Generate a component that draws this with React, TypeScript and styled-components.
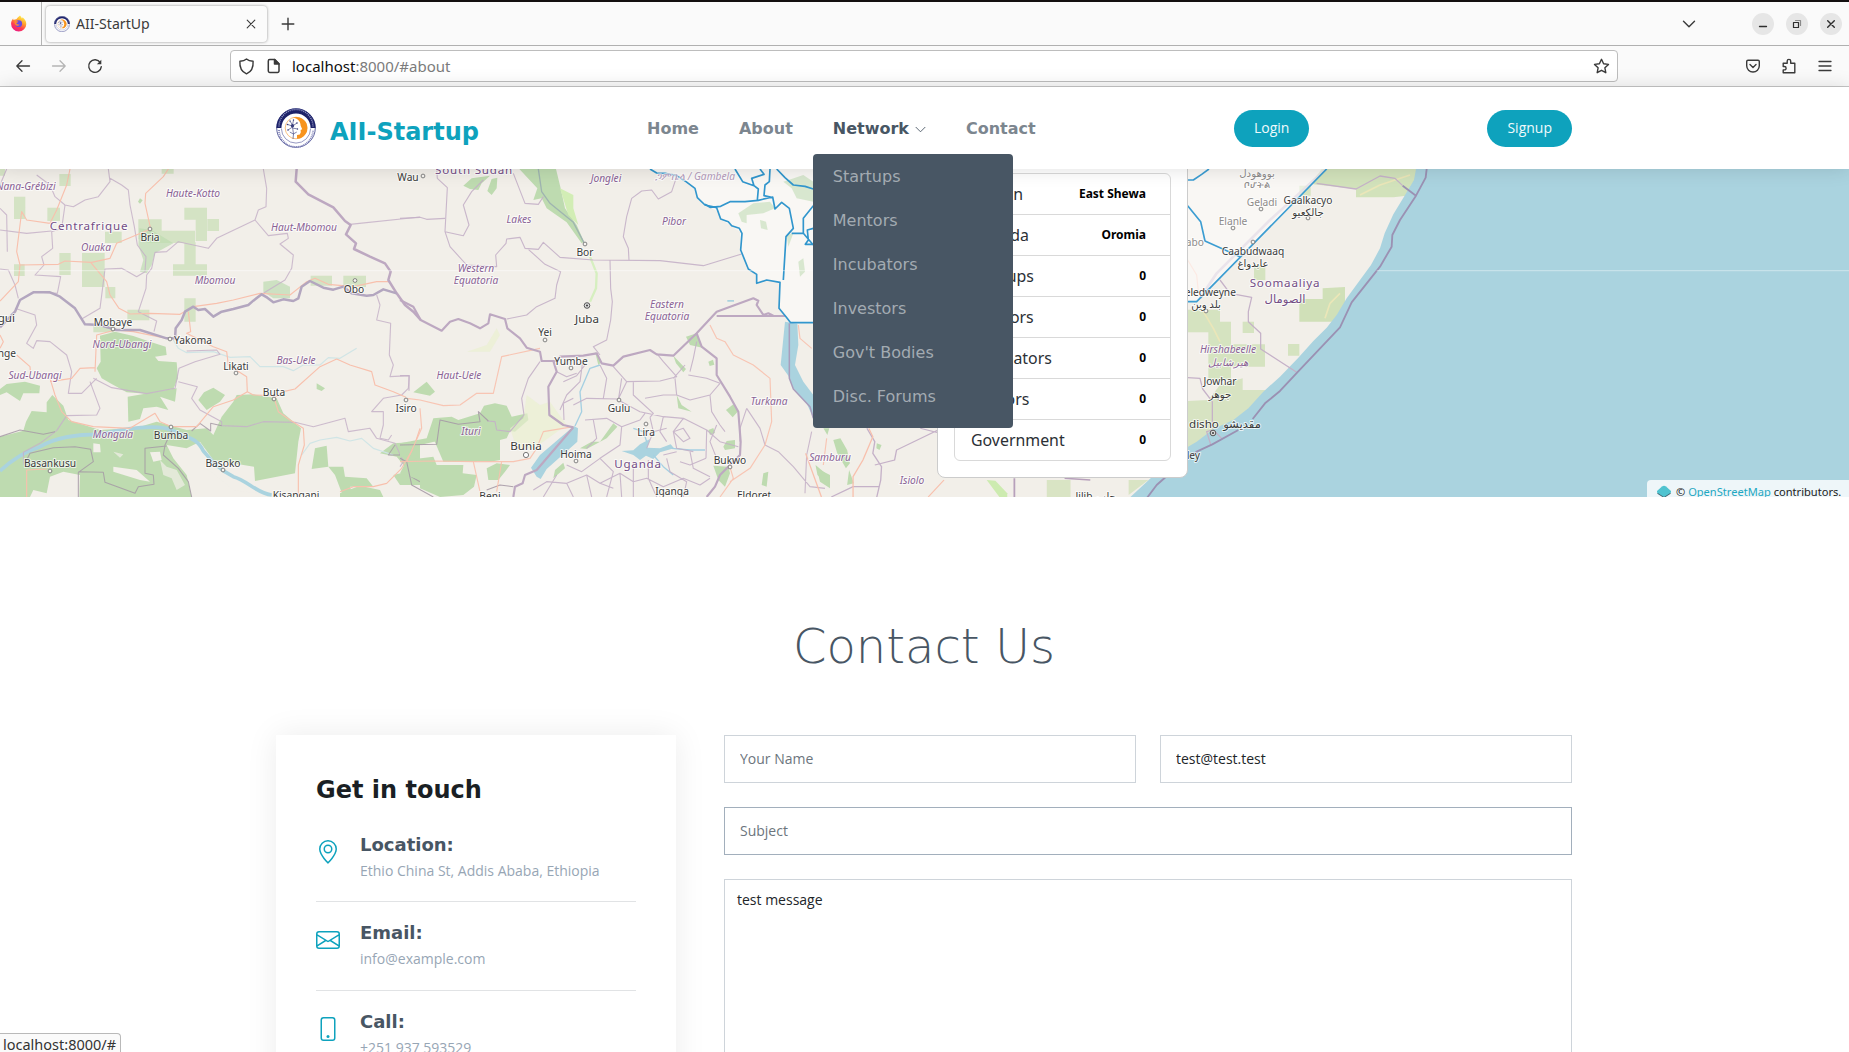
import React from "react";
import styled, { createGlobalStyle } from "styled-components";
import { BsEnvelope, BsGeoAlt, BsPhone } from "react-icons/bs";

const UI = `"Noto Sans", "Open Sans", sans-serif`;
const BODY = `"Open Sans", "Noto Sans", sans-serif`;
const HEAD = `"DejaVu Sans", sans-serif`;
const TEAL = "#0ea2bd";
const SLATE = "#485664";

const Global = createGlobalStyle`
  *, *::before, *::after { box-sizing: border-box; }
  html, body { margin: 0; padding: 0; background: #fff; overflow: hidden; }
  body { font-family: ${BODY}; font-size: 14px; color: #212529; }
`;

const Window = styled.div`
  position: relative;
  display: flex;
  flex-direction: column;
  width: 1849px;
  height: 1052px;
  overflow: hidden;
  background: #fff;
`;

/* ---------- browser chrome ---------- */

const TabStrip = styled.div`
  flex: none;
  display: flex;
  align-items: center;
  height: 46px;
  border-top: 2px solid #130f10;
  border-bottom: 1px solid #b0b0b0;
  background: #fafafa;
`;

const PinnedTab = styled.div`
  display: flex;
  align-items: center;
  width: 42px;
  height: 100%;
  padding-left: 10px;
  border-right: 1px solid #b4b4b4;
`;

const Tab = styled.div`
  display: flex;
  align-items: center;
  width: 221px;
  height: 36px;
  margin-left: 4px;
  padding: 0 11px 0 8px;
  border-radius: 4px;
  background: #fbfbfb;
  box-shadow: 0 0 3px rgba(0, 0, 0, 0.42);
`;

const TabTitle = styled.span`
  flex: 1;
  margin-left: 6px;
  padding-top: 1px;
  font: 14.1px/20px ${UI};
  color: #3a3a3a;
`;

const IconSlot = styled.span<{ $left?: number; $color?: string }>`
  display: inline-flex;
  flex: none;
  margin-left: ${(p) => p.$left ?? 0}px;
  color: ${(p) => p.$color ?? "#3a3a3a"};
  svg { display: block; }
`;

const WindowControls = styled.div`
  display: flex;
  align-items: center;
  gap: 12px;
  margin-left: auto;
  padding-right: 7px;
`;

const RoundButton = styled.span`
  display: grid;
  place-items: center;
  width: 22px;
  height: 22px;
  border-radius: 50%;
  background: #e6e6e6;
  color: #2e2e2e;
  svg { display: block; }
`;

const Toolbar = styled.div`
  flex: none;
  display: flex;
  align-items: center;
  height: 41px;
  padding-left: 15px;
  border-bottom: 1px solid #c6c6c6;
  background: #fafafa;
`;

const UrlField = styled.div`
  display: flex;
  align-items: center;
  width: 1388px;
  height: 32px;
  margin-left: 127px;
  padding: 0 7px 0 7px;
  border: 1px solid #bdbdbd;
  border-radius: 4px;
  background: #fff;
`;

const UrlText = styled.span`
  flex: 1;
  margin-left: 10px;
  font: 15px/20px ${UI};
  color: #7b7b7b;
  b { font-weight: 400; color: #0c0c0d; }
`;

const StatusBubble = styled.div`
  position: absolute;
  left: 0;
  bottom: 0;
  width: 121px;
  height: 19px;
  padding-left: 3px;
  border-top: 1px solid #b9b9b9;
  border-right: 1px solid #b9b9b9;
  border-top-right-radius: 4px;
  background: #fafafa;
  font: 14.5px/21px ${UI};
  color: #333;
  white-space: nowrap;
`;

/* ---------- site header ---------- */

const SiteHeader = styled.header`
  position: relative;
  z-index: 5;
  flex: none;
  height: 82px;
  background: #fff;
  box-shadow: 0 0 18px rgba(0, 0, 0, 0.13);
`;

const HeaderGrid = styled.div`
  display: grid;
  grid-template-columns: 371px 587px 1fr auto;
  align-items: center;
  width: 1296px;
  height: 82px;
  margin: 0 0 0 276px;
`;

const Brand = styled.div`
  display: flex;
  align-items: center;
  height: 41px;
`;

const BrandName = styled.span`
  margin-left: 14px;
  padding-top: 8px;
  font: 700 24px/28px ${HEAD};
  color: ${TEAL};
`;

const Nav = styled.nav`
  display: flex;
  align-items: center;
  gap: 40px;
  padding-top: 2px;
`;

const NavItem = styled.span<{ $active?: boolean }>`
  position: relative;
  display: flex;
  align-items: center;
  gap: 6px;
  font: 700 16px/24px ${HEAD};
  color: ${(p) => (p.$active ? SLATE : "#7c868f")};
  white-space: nowrap;
`;

const Dropdown = styled.div`
  position: absolute;
  top: 37px;
  left: -20px;
  display: flex;
  flex-direction: column;
  width: 200px;
  height: 274px;
  padding-top: 1px;
  border-radius: 4px;
  background: ${SLATE};
`;

const DropdownItem = styled.span`
  padding: 10px 20px;
  font: 400 16px/24px ${HEAD};
  color: #a3abb2;
`;

const Pill = styled.span`
  justify-self: start;
  padding: 7px 20px 9px;
  border-radius: 50px;
  background: ${TEAL};
  font: 14px/21px ${BODY};
  color: #eefafc;
`;

/* ---------- map ---------- */

const MapSection = styled.section`
  position: relative;
  flex: none;
  height: 328px;
  overflow: hidden;
  background: #f2efe9;
`;

const Popup = styled.div`
  position: absolute;
  top: -13px;
  left: 937px;
  width: 251px;
  padding: 16px;
  border: 1px solid #ccc;
  border-radius: 8px;
  background: #fff;
`;

const StatList = styled.div`
  border: 1px solid #d9d9d9;
  border-radius: 6px;
`;

const StatRow = styled.div`
  display: flex;
  align-items: center;
  justify-content: space-between;
  height: 41px;
  padding: 0 24px 0 16px;
  font: 15.9px/24px "Noto Sans", sans-serif;
  color: #2b3035;
  &:first-child { height: 40px; padding-bottom: 1px; }
  & + & { border-top: 1px solid #d9d9d9; }
  b { font: 700 12px/18px "Noto Sans", sans-serif; color: #000; }
`;

const Attribution = styled.div`
  position: absolute;
  right: 0;
  bottom: -6px;
  display: flex;
  align-items: center;
  width: 202px;
  height: 23px;
  padding-left: 10px;
  border-top-left-radius: 4px;
  background: rgba(255, 255, 255, 0.8);
  font: 11.1px/16px "Noto Sans", sans-serif;
  color: #222;
  white-space: nowrap;
  a { color: #1fa8c2; }
  span { margin-left: 5px; }
`;

/* ---------- contact ---------- */

const Contact = styled.section`
  flex: 1;
  display: flex;
  flex-direction: column;
  width: 1296px;
  margin: 0 0 0 276px;
  padding-top: 117px;
`;

const ContactTitle = styled.h2`
  margin: 0;
  height: 121px;
  font: 200 48px/64px ${HEAD};
  text-align: center;
  color: ${SLATE};
`;

const Columns = styled.div`
  display: flex;
  align-items: flex-start;
  gap: 48px;
`;

const InfoCard = styled.div`
  flex: none;
  width: 400px;
  height: 420px;
  padding: 39px 40px;
  background: #fff;
  box-shadow: 0 0 30px rgba(0, 0, 0, 0.08);
`;

const InfoTitle = styled.h3`
  margin: 0 0 19px;
  font: 700 24px/33px ${HEAD};
  color: #1a1f24;
`;

const InfoLabel = styled.h4`
  margin: 6px 0 4px;
  font: 700 18px/22px ${HEAD};
  color: ${SLATE};
`;

const InfoItem = styled.div`
  display: flex;
  height: 89px;
  padding-top: 14px;
  border-bottom: 1px solid #e1e3e5;
  & > svg { flex: none; margin-top: 12px; color: ${TEAL}; }
  &:first-of-type {
    height: 76px;
    padding-top: 1px;
    ${InfoLabel} { margin-top: 7px; }
    & > svg { margin-top: 13px; }
  }
`;

const InfoText = styled.div`
  margin-left: 20px;
`;

const InfoValue = styled.p`
  margin: 0;
  font: 14px/21px ${BODY};
  color: #97a6b5;
`;

const Form = styled.form`
  flex: 1;
  display: grid;
  grid-template-columns: 1fr 1fr;
  gap: 24px;
`;

const Field = styled.input<{ $wide?: boolean; $focus?: boolean }>`
  grid-column: ${(p) => (p.$wide ? "1 / -1" : "auto")};
  width: 100%;
  height: 48px;
  padding: 0 15px 2px;
  border: 1px solid ${(p) => (p.$focus ? "#a2afbc" : "#ced4da")};
  border-radius: 0;
  outline: 0;
  font: 14px/21px ${BODY};
  color: #212529;
  &::placeholder { color: #6c757d; opacity: 1; }
`;

const Message = styled.textarea`
  grid-column: 1 / -1;
  height: 300px;
  padding: 9px 12px;
  border: 1px solid #ced4da;
  outline: 0;
  resize: none;
  font: 14px/21px ${BODY};
  color: #212529;
`;

/* ---------- icons ---------- */

const Stroke = ({ size = 16, box = 16, w = 1.3, children }: any) => (
  <svg width={size} height={size} viewBox={`0 0 ${box} ${box}`} fill="none" stroke="currentColor"
    strokeWidth={w} strokeLinecap="round" strokeLinejoin="round">{children}</svg>
);

const FirefoxLogo = () => (
  <svg width="17" height="17" viewBox="0 0 17 17">
    <defs>
      <linearGradient id="fx" x1="0.75" y1="0.05" x2="0.25" y2="1">
        <stop offset="0" stopColor="#fff04a" /><stop offset="0.35" stopColor="#ffa02c" />
        <stop offset="0.65" stopColor="#ff3d51" /><stop offset="1" stopColor="#e8178a" />
      </linearGradient>
    </defs>
    <path d="M10 0.6c1 1 1.6 1.9 1.9 2.9 .5-.4.7-.8.7-1.2 2.200 1.700 3.700 4 3.700 6.700a7.600 7.600 0 0 1-15.200 0c0-2.200.7-4 2-5.400l.4 1.500c.8-.6 1.700-.9 2.800-.9C7.300 2.900 8.600 1.800 10 .6z" fill="url(#fx)" />
    <circle cx="8.700" cy="8.700" r="3.400" fill="#6b4be0" />
    <path d="M4.500 6.300c1.500-.7 2.600.1 3.800.3-.2 1.100-1.200 1.300-2 1.500.3 1.400 2 1.700 3.200 1.100-1 2.600-5.300 2.200-5-2.900z" fill="#ff8a2e" />
  </svg>
);

/* Round seal: navy upper band, outlined lower band, orange profile and neural branches */
const Seal = ({ size }: { size: number }) => (
  <svg width={size} height={size} viewBox="0 0 40 40">
    <circle cx="20" cy="20" r="19.3" fill="#fff" stroke="#4a4f92" strokeWidth="0.900" />
    <path d="M0.400 20a19.600 19.600 0 0 1 39.200 0h-5a14.600 14.600 0 0 0-29.200 0z" fill="#1c2168" />
    <path d="M3 18.500a17 17 0 0 1 34 0" fill="none" stroke="#a9acd6" strokeWidth="1.500" strokeDasharray="1.100 0.900" opacity="0.800" />
    <path d="M3 22a17 17 0 0 0 34 0" fill="none" stroke="#8587bb" strokeWidth="1.900" strokeDasharray="1 0.900" />
    <path d="M5.400 20.500a14.600 14.600 0 0 0 29.200 0" fill="none" stroke="#6a6da8" strokeWidth="0.700" />
    <circle cx="20" cy="20" r="10.800" fill="#fff" stroke="#f5a54a" strokeWidth="0.700" />
    <path d="M17 9.600a10.900 10.900 0 1 1 4 21.200v-3.800l2.800-.4 1-2.400-.2-2.200 1.600-.8-1.600-3.600c0-4.300-3.200-7-7.600-8z" fill="#f7931e" />
    <path d="M17 31l.5-5-1-7M16.500 18l-5-1.500M16.500 18l4.500-3M16.500 17l-2.500-4M16.500 17l1-5M16.500 19l-4.500 3M16.500 20l5 1M17.300 26l-3.500-2M17.300 26l3.500-2" fill="none" stroke="#3a3f7d" strokeWidth="0.650" />
    <circle cx="16.500" cy="17.700" r="1.700" fill="#3a3f7d" />
    <g fill="#3a3f7d"><circle cx="11.500" cy="16.500" r=".8" /><circle cx="21" cy="15" r=".8" /><circle cx="14" cy="13" r=".7" /><circle cx="17.500" cy="12" r=".7" /><circle cx="12" cy="22" r=".8" /><circle cx="21.500" cy="21" r=".7" /></g>
  </svg>
);

/* ---------- map drawing ---------- */

type Kind = "city" | "big" | "region" | "country" | "faded" | "fadedRegion";
const KIND: Record<Kind, any> = {
  city: { fontSize: 10.2, fill: "#3a3a3a" },
  big: { fontSize: 11.6, fill: "#3a3a3a" },
  region: { fontSize: 10.2, fontStyle: "italic", fill: "#8a6295" },
  country: { fontSize: 11.6, fill: "#734c85", letterSpacing: 0.8 },
  faded: { fontSize: 10.2, fill: "#8d8b8a" },
  fadedRegion: { fontSize: 10.2, fontStyle: "italic", fill: "#b59cbc" },
};

type Label = [string, number, number, Kind, ("start" | "end")?];

const LABELS: Label[] = [
  ["Nana-Grébizi", 26, 17, "region"], ["Haute-Kotto", 193, 24, "region"], ["Haut-Mbomou", 304, 58, "region"],
  ["Centrafrique", 89, 57, "country"], ["Ouaka", 96, 78, "region"], ["Bria", 150, 68, "city"],
  ["Mbomou", 215, 111, "region"], ["Obo", 354, 120, "city"], ["Bangui", 15, 149, "big", "end"],
  ["Mobaye", 113, 153, "city"], ["Yakoma", 193, 171, "city"], ["Nord-Ubangi", 122, 175, "region"],
  ["Businge", 16, 184, "city", "end"], ["Sud-Ubangi", 35, 206, "region"], ["Likati", 236, 197, "city"],
  ["Bas-Uele", 296, 191, "region"], ["Buta", 274, 223, "city"], ["Isiro", 406, 239, "city"],
  ["Mongala", 113, 265, "region"], ["Bumba", 171, 266, "city"], ["Basankusu", 50, 294, "city"],
  ["Basoko", 223, 294, "city"], ["Kisangani", 296, 326, "city"], ["Wau", 408, 8, "city"],
  ["South Sudan", 474, 1, "country"], ["Jonglei", 606, 9, "region"], ["ጋምቤላ / Gambela", 695, 7, "fadedRegion"],
  ["Lakes", 519, 50, "region"], ["Pibor", 674, 52, "region"], ["Bor", 585, 83, "city"],
  ["Western", 476, 99, "region"], ["Equatoria", 476, 111, "region"], ["Juba", 587, 150, "big"],
  ["Yei", 545, 163, "city"], ["Eastern", 667, 135, "region"], ["Equatoria", 667, 147, "region"],
  ["Yumbe", 571, 192, "city"], ["Haut-Uele", 459, 206, "region"], ["Gulu", 619, 239, "city"],
  ["Turkana", 769, 232, "region"], ["Lira", 646, 263, "city"], ["Ituri", 471, 262, "region"],
  ["Bunia", 526, 277, "big"], ["Hoima", 576, 285, "city"], ["Uganda", 638, 295, "country"],
  ["Bukwo", 730, 291, "city"], ["Iganga", 672, 322, "city"], ["Eldoret", 754, 326, "city"],
  ["Beni", 490, 327, "city"], ["Samburu", 830, 288, "region"], ["Isiolo", 912, 311, "region"],
  ["بووهودل", 1257, 4, "faded"], ["ቦሆትል", 1257, 15, "faded"], ["Geladi", 1262, 33, "faded"], ["Gaalkacyo", 1308, 31, "city"],
  ["جالكعيو", 1308, 43, "city"], ["Elanle", 1233, 52, "faded"], ["Qabribayabo", 1204, 73, "faded", "end"],
  ["Caabudwaaq", 1253, 82, "city"], ["عابدواغ", 1253, 94, "city"], ["Beledweyne", 1207, 123, "city"],
  ["بلد وين", 1206, 135, "city"], ["Soomaaliya", 1285, 114, "country"], ["الصومال", 1285, 130, "country"],
  ["Hirshabeelle", 1228, 180, "region"], ["هيرشابيل", 1228, 193, "region"], ["Jowhar", 1220, 212, "city"],
  ["جوهر", 1220, 225, "city"], ["disho", 1189, 255, "big", "start"], ["مقديشو", 1242, 255, "big"],
  ["Barawa ley", 1200, 286, "city", "end"], ["Jilib", 1084, 327, "city"], ["جلب", 1106, 327, "city"],
];

const TOWNS = [
  [150, 60], [355, 111.500], [113, 160], [170, 170], [236, 204], [274, 230], [406, 231], [171, 258], [50, 302],
  [223, 301], [423, 7], [585, 75], [545, 171], [571, 199], [619, 231], [646, 255], [576, 292], [730, 298],
  [1261, 40], [1308, 49], [1233, 59], [1253, 73], [1206, 142], [1220, 230],
];

const box = (list: number[][]) => list.map(([x, y, w, h]) => `M${x},${y}h${w}v${h}h${-w}z`).join("");

const West = () => (
  <g transform="translate(0,-4) scale(0.33333)" fill="none" strokeLinejoin="round">
    <path fill="#cfe0bd" opacity="0.850" d={box([[178, 27, 34, 36], [42, 95, 34, 67], [142, 128, 38, 40], [415, 163, 70, 60], [440, 197, 145, 37], [553, 128, 68, 36],
      [587, 162, 34, 66], [622, 162, 35, 36], [553, 232, 34, 66], [519, 298, 102, 34], [178, 264, 34, 66], [246, 264, 68, 102], [316, 366, 30, 34],
      [42, 298, 32, 35], [382, 434, 66, 32], [553, 400, 34, 70], [315, 200, 50, 34], [932, 332, 64, 30], [1030, 332, 68, 34], [0, 12, 15, 20], [485, 12, 36, 14], [280, 480, 60, 22]])} />
    <path fill="#bedbb0" d="M418,190 455,195 520,235 465,265 455,300 440,325 420,320 430,285 415,240zM790,350 830,345 870,365 870,400 820,400 790,380z" opacity="0.700" />
    <g fill="#bedbb0">
      <path d="M300,512 345,500 400,513 450,530 497,545 500,570 465,575 475,588 530,592 534,640 520,672 440,686 380,682 335,657 305,640 290,610 302,590z" />
      <path d="M20,657 75,650 120,662 118,685 70,685 60,708 20,682 0,690 0,672z" />
      <path d="M0,815 70,797 78,770 95,738 140,742 140,712 157,690 190,722 205,765 300,795 410,788 470,770 560,795 620,790 640,810 665,755 700,710 710,690 760,688 830,700 850,745 903,790 895,830 885,925 765,948 762,905 640,885 600,830 560,850 500,840 520,880 560,930 575,996 0,996z" />
      <path d="M595,705 612,682 640,668 675,690 660,710 620,735zM383,695 530,670 525,710 480,695 505,735 470,725 430,730 420,762 385,770z" />
      <path d="M945,850 980,842 985,905 935,912zM1140,865 1180,835 1260,830 1260,900 1215,905 1190,875zM985,905 1030,905 1035,935 1100,940 1120,965 1050,965 1060,996 1030,996 1005,930zM1020,985 1080,962 1140,975 1150,996 1020,996zM950,655 975,670 965,678 950,672zM420,100l8,6-8,10-6-6zM1180,930l40,-10 40,10v30h-60z" />
    </g>
    <g fill="#f2efe9">
      <path d="M150,935 190,920 240,930 238,996 90,996 100,975 140,985zM280,835 300,838 302,862 280,862zM450,862 480,860 485,885 460,890zM340,905l70,10 40,35-30,-5-80,-25z" />
      <path d="M480,885 500,905 530,915 555,960 530,975 515,940 490,930zM340,860l30,8-10,10z" opacity="0.700" />
      <path d="M610,868 640,885 700,940 740,948 770,985 700,975 640,925 600,900z" opacity="0.500" />
    </g>
    <path stroke="#aad3df" strokeWidth="11" d="M0,918C40,880 80,858 120,845C170,815 230,808 300,808C380,790 470,775 520,797C560,820 590,815 610,858C630,880 650,910 700,935C740,945 770,985 815,990" />
    <path stroke="#d0e5e6" strokeWidth="3.600" d="M520,525 535,550 560,563 640,560 690,577 750,575 780,605 850,605 880,617 910,600 960,600 985,578 1020,580 1070,550M905,870 930,835 960,825 1010,817 1050,828 1085,820 1120,850 1180,870" />
    <g stroke="#c5b1c8" strokeWidth="3.300" strokeOpacity="0.850">
      <path d="M325,12 330,50 295,95 255,105 220,125 195,120 165,95 150,60 110,30M330,40 365,60 385,75 390,120 403,185 412,240 438,275 435,320 410,335 380,318 365,310 315,312 300,430 245,462M790,12 800,70 798,125 775,135 765,165 650,220 625,250 535,230 500,260 465,262 455,310 440,330 438,370 415,440 470,468 462,500M765,165 805,212 862,205 865,220 840,237 880,270 875,310 855,345 790,385" />
      <path d="M1050,178 1260,156M1130,390 1140,420 1130,465 1172,475 1168,570 1180,600 1170,635 1228,632 1225,670 1205,690 1150,700 1115,740 1150,740 1150,780 1140,820 1165,825 1175,810M195,120 185,190 155,200 158,250 125,275 132,300 105,330 182,335 172,385 130,382M45,430 105,450 110,480 80,535 100,550 110,527 150,530 200,570 215,620 205,685 245,685 290,640" />
      <path d="M0,195 80,205 155,198M0,312 25,315 45,360 55,400M20,12 0,60M0,130 20,150 22,260M270,650 300,730 290,750 200,752 170,797 120,835 70,862 72,900M280,640 335,668 440,686 525,670 537,610 585,590 660,568 650,555 560,558M535,650 592,665 575,700 600,735 665,770 665,782 740,785 790,770 885,772 940,785 1035,760 1045,800 1110,790 1130,820 1185,835 1210,890 1200,905" />
    </g>
    <g stroke="#a69aa6" strokeWidth="3.200" opacity="0.850">
      <path d="M0,815 60,795 130,808 165,800M75,895 90,865 160,848 225,845 272,853 280,890 235,922 235,996M235,920 310,922 315,952 405,985 415,965 462,958 460,930 435,925 435,850 500,843" />
      <path d="M515,797 495,840 490,870 535,910 565,950 575,996M575,798 600,775 632,798 632,775 665,782M1185,840 1165,870 1200,870 1222,850M1215,900 1225,930 1260,950" />
    </g>
    <g stroke="#f8c0ad" strokeWidth="3.400">
      <path d="M505,12 490,35 437,85 435,115 452,192 350,235 330,280 275,292 195,288 175,298 60,300 55,350 0,408M60,300 50,260 60,180 65,140 80,165 150,175 170,135 200,60 210,12M272,292 320,350 330,390 357,430 390,447 450,445 540,448 580,425 650,415 700,405 780,385 870,390 920,350 945,340 985,358 1060,365 1130,350 1170,350" />
      <path d="M565,440 572,500 560,505 640,545 680,560 685,600 740,635 742,680 760,690 820,692 835,740 870,765 910,790 913,840 895,900 895,996M520,785 590,785 640,725 700,705 742,680M150,640 165,690 185,740 215,770 280,785 390,790 465,745 480,770 515,785M285,620 290,510 345,495 400,500 500,520M285,608 240,610 215,640 150,650M0,510 10,530 0,550M50,570 90,605 92,630" />
      <path d="M820,700 850,680 885,672 960,605 1010,582 1050,600 1115,620 1125,660 1180,680 1218,697M1260,790 1240,850 1205,910 1160,955 1120,965 1060,965 1020,980M80,996 80,915 140,912" />
    </g>
    <path stroke="#bda8c1" strokeWidth="7.500" d="M890,12 887,50 925,88 1000,127 1035,168 1052,180 1038,208 1068,235 1062,252 1110,275 1155,295 1172,320 1165,345 1190,385 1215,420 1240,440 1262,465" />
    <path stroke="#b3a6bf" strokeWidth="7.500" d="M0,487 45,440 60,405 100,382 150,382 180,395 225,430 255,478 300,480 350,495 420,495 500,520 525,520 527,490 545,465 555,440 580,425 595,435 615,432 640,455 665,440 700,432 745,420 760,407 785,388 802,398 820,412 850,403 880,408 895,400 905,365 930,348 970,368 1000,374 1030,365 1055,385 1100,392 1120,390 1150,373 1190,385" />
  </g>
);

const Middle = () => (
  <g transform="translate(400,-4) scale(0.33333)" fill="none" strokeLinejoin="round">
    <g fill="#bedbb0">
      <path d="M358,12H468L482,70 495,130 530,180 552,230 545,235 500,172 440,130 425,100 400,105 412,70z" />
      <path d="M190,62 215,40 270,32 245,55 235,75 210,72zM262,78 275,42 292,38 290,70 275,90z" />
      <path d="M0,835 80,820 100,760 155,755 175,765 240,745 252,722 285,715 320,722 335,755 382,745 385,765 345,800 330,798 320,820 300,825 300,885 270,890 225,888 220,830 125,825 60,840 0,880z" />
      <path d="M100,820h130v70l-100,0z" />
      <path d="M20,885 100,875 110,900 190,900 188,925 230,930 222,965 190,990 120,996 60,970 60,945 0,925zM40,682 80,650 105,680 90,692zM260,910l30,-15 40,5-15,20 -20,25h-30z" />
      <path d="M858,515 890,505 907,548 870,540zM820,572 858,612 850,622 828,595zM540,850 575,830 600,830 640,775 652,785 620,820 560,852zM978,735 1000,718 1015,738 998,757zM970,845 980,828 1005,825 1005,850 975,855zM940,902 985,905 990,925 975,965 955,945zM925,795l15,-6 5,15-15,6zM925,590l14,-6 4,15-14,4zM465,915 490,893 495,910 460,940zM830,690l15,30 30,20-40,-10zM585,560l20,30-10,10zM1250,910l40,20v40l-30,-20zM1090,925l15,-5 -5,45-15,-5z" />
    </g>
    <path fill="#d2edb5" d="M480,70 520,90 520,130 535,180 505,150z" />
    <path fill="#e9f0cf" d="M380,690 420,720 450,710 500,780 430,830 400,850 350,850 330,790 370,760zM200,560l60,-20 30,-50 10,20-30,50z" opacity="0.650" />
    <path stroke="#d6efc0" strokeWidth="7" d="M570,275 590,325 588,370 570,410" />
    <path stroke="#9fb4b0" strokeWidth="4" d="M415,12 425,80 450,115 520,172 553,235" />
    <g fill="#aad3df">
      <path d="M522,783 534,790 532,830 440,912 422,942 410,935 393,908 420,870z" />
      <path d="M1155,470 1192,476 1195,540 1185,600 1210,650 1240,690 1240,760 1220,715 1180,670 1165,632 1142,600 1150,520z" />
      <path d="M665,858 700,856 720,838 750,822 742,848 780,850 812,838 822,850 780,862 760,882 738,872 720,885 700,870zM982,405h20v5h-20z" />
    </g>
    <path stroke="#a5d0e2" strokeWidth="4" d="M760,870 790,905 820,930M740,830 730,800 700,790M815,850 870,855 915,855M600,600 570,610 540,680 545,740 525,783" />
    <g stroke="#c5b1c8" strokeWidth="3.300" opacity="0.900">
      <path d="M110,12 112,40 142,68 135,200 190,212 207,180 190,120 215,80 250,45M340,25 375,115 415,118 430,95M0,160 60,157 80,163 135,160M135,200 150,245 200,300 290,305 287,270 318,235 320,222 360,217 375,250 415,253 430,232 480,277 580,285 780,287 910,302 1025,267M385,253 435,298 482,320 470,360 465,400 410,425 380,450 320,462" />
      <path d="M630,285 632,370 637,410 632,465 620,525 580,545 600,570M830,35 815,80 775,102 755,75 725,78 695,100 680,155 670,215 685,250 687,285M420,590 385,640 365,700 372,750 330,800 290,795 285,770 262,768M0,632h27v45" />
      <path d="M470,620 500,635 530,625M490,650 530,632 555,600M548,590 540,650 500,690 480,735M520,700 490,715 492,765M520,720 560,700 655,702 680,650 640,605M600,600 620,640 610,700M680,650 780,648 830,635 790,590 770,565M700,650 700,690 760,745 750,757M735,700 790,690 830,690 825,640M665,640 655,705 720,740 790,755 850,760 920,795 918,880M830,690 870,705 930,690 935,740 960,780 975,800M870,620 880,580 890,530M865,630 920,640 960,655 930,690M855,600 820,640M555,765 620,760 665,785 660,840 600,880 545,920 500,900M580,765 590,820 560,850M665,785 720,765 735,745M750,757 760,800 740,850M850,760 820,800 830,850 880,860M790,755 780,800 800,830M1040,730 1080,790 1095,840 1135,860 1180,905 1230,965 1275,970M1040,730 1020,790 1020,830M1235,800 1220,870 1215,985" />
      <path d="M400,975 440,950 500,955 560,930 600,955 660,925 700,950 740,940 790,965 850,940 900,960 930,940M430,996 470,930M500,955 520,996M560,930 575,996M600,880 640,920 620,996M660,925 665,996M700,890 700,996M745,885 745,940 770,996M800,880 810,920 860,950 850,996M870,860 880,910 930,935M820,800 850,830 870,820 850,790zM760,800 800,790M790,870 830,860M600,955 640,970M918,880 870,900 840,890" />
      <path d="M920,795 960,830 1015,845M950,780 930,830 950,880" />
    </g>
    <path stroke="#a69aa6" strokeWidth="3.200" opacity="0.900" d="M265,768 235,740 240,770 175,778 120,765 110,838 0,840M0,880 20,890 35,960 100,996M260,975 300,960 340,965" />
    <g stroke="#f8c0ad" strokeWidth="3.400" opacity="0.900">
      <path d="M930,480 950,520 975,530 1000,570 1060,600 1110,640 1115,770 1095,840 1050,910 990,950M20,700 60,705 130,722 180,720 230,685 280,685 305,575 420,550M0,890 100,888 220,890 340,890 390,880 410,850 430,800 520,785M60,730 65,790 20,890M220,890 240,980M305,890 290,980M1195,480 1200,520 1235,550M990,906 1000,940 960,996M1280,820 1270,900" />
    </g>
    <g stroke="#bda8c1" strokeWidth="6.500">
      <path d="M0,405 40,425 62,465 125,497 150,470 175,462 210,475 240,490 265,475 270,448 315,462 322,490 360,520 380,548 420,560 425,588 470,588 480,575 550,572 590,565 605,595 640,602 670,575 750,555 770,568 820,572 890,505 950,440 1060,400 1075,407 1070,420 1090,450 1105,445 1120,452M950,453H1155" />
      <path d="M460,588 470,620 445,665 448,750 490,780 520,787M520,787 410,915 375,930 368,955 345,965 340,996M890,505 905,545 950,580 950,630 990,695 1015,740 1022,830 1020,870 960,930 945,965 920,996" />
      <path d="M1168,475V640L1180,672 1230,725 1240,760" stroke="#a99dbc" strokeWidth="4.500" />
    </g>
  </g>
);

const South = () => (
  <g transform="translate(600,-69) scale(0.3954,0.33333)" fill="none">
    <path fill="#bedbb0" d="M565,985 580,985 575,1005zM590,1020 608,1015 625,1050 632,1090 622,1105 600,1060zM545,1095 570,1120 580,1155 550,1125zM630,1110 642,1150 625,1155zM700,1030l12,5-5,15-8,-5z" />
    <path fill="#cdebb0" d="M978,1140 1000,1142 1030,1180 1030,1191 1010,1191z" />
    <path stroke="#c5b1c8" strokeWidth="3.400" d="M675,985 695,1025 690,1060 712,1100 710,1140 700,1191M860,1000 810,985M855,990 750,1050 745,1080 695,1095M585,1191 640,1160 705,1160" />
    <path stroke="#b7a0bb" strokeWidth="4.500" d="M1048,1135V1191M1175,1135 1240,1140" />
    <path stroke="#f8c0ad" strokeWidth="3.300" d="M680,985 690,1010 665,1080 640,1130 640,1191M520,1060 560,1191M870,1140 830,1191" />
    <path fill="#cfe0b4" opacity="0.700" d="M1130,1140h60v51h-60zM1337,1140h50l-50,45z" />
  </g>
);

const East = () => (
  <g transform="translate(1180,-4) scale(0.33333)" fill="none" strokeLinejoin="round">
    <g fill="#d0e0b8">
      <path d="M400,45 425,12H720L700,60 680,92 640,97H528V72L400,58z" opacity="0.950" />
      <path opacity="0.850" d={box([[222, 300, 34, 45], [23, 434, 97, 68], [120, 470, 33, 34], [188, 470, 34, 34], [85, 502, 68, 103], [153, 538, 102, 67], [324, 537, 34, 35], [85, 605, 68, 40], [358, 62, 34, 30]])} />
      <path d="M428,370 495,366V420L470,470H358V402H428z" />
      <path d="M23,708 85,705 120,660 188,640V675H258L160,780 23,860z" opacity="0.800" />
    </g>
    <path stroke="#ebe6b8" strokeWidth="5" d="M70,440 100,490 120,530M435,460 450,415 480,385M540,90 600,60 690,30" />
    <path fill="#aad3df" d="M708,12 702,45 672,95 640,148 614,205 600,250 573,300 540,345 500,400 470,450 440,488 400,528 355,578 300,635 250,680 205,730 160,765 100,792 50,830 23,846 -84,936 -153,1000H2010V12z" />
    <path stroke="#c5b1c8" strokeWidth="3.800" d="M410,55 528,72 600,33 645,40 668,62M120,345 150,385 215,397 205,440 205,470 242,505 242,552 350,622M23,638 60,640 68,672 97,710V790M97,795 80,800 92,838M100,795 125,820" />
    <path stroke="#c9b8ce" strokeWidth="8" opacity="0.700" d="M440,10 270,165 110,325 60,400" />
    <path stroke="#f9d3c6" strokeWidth="3.500" d="M23,285 50,330 55,380" />
    <path stroke="#9b91b3" strokeWidth="5.500" d="M740,12 737,38 708,92 660,165 637,210 635,245 600,305 515,412 480,487 352,622 300,678 255,715 218,762M175,795 97,838 50,860 15,885 -70,960 -100,1000M668,62 708,92" />
    <path stroke="#fff" strokeOpacity="0.350" strokeWidth="4" d="M590,317H2010" />
  </g>
);

const Ethiopia = () => (
  <g transform="translate(400,-4) scale(0.33333)" strokeLinejoin="round">
    <path fill="#fff" fillOpacity="0.500" d="M750,12 790,28 830,30 885,70 890,100 915,120 955,140 965,165 1020,200 1020,260 1045,310 1070,330 1070,355 1100,345 1140,352V430L1170,475H1240L2390,410 2520,275 2780,12z" />
    <path fill="#bedbb0" opacity="0.550" d="M1015,145 1060,115 1110,110 1125,130 1090,145 1040,150 1040,175 1025,170zM1080,165l18,5 5,25-20,-5zM1160,210l20,-5-15,40zM1195,290l15,-10 5,40-15,15zM1150,50l60,-20 30,20v60l-50,-10-15,-30z" />
    <g fill="none" stroke="#3196cd" strokeWidth="5">
      <path d="M750,12 770,24 795,25 830,32 858,50 885,70 892,98 915,120 950,128 962,162 985,170 995,182 1018,190 1026,205 1022,255 1045,312 1070,328 1070,355 1100,345 1140,352 1137,430 1158,455 1172,473H1240" />
      <path d="M915,118 930,127 962,124 990,110 1035,110 1075,106 1118,96 1125,132 1145,112 1168,130 1180,190 1158,215 1150,345M1005,12 1028,50 1062,62 1055,40 1092,28 1080,12M1062,62 1075,72 1072,105M1110,12 1108,50 1095,60 1092,92 1118,98M1130,12 1155,38 1180,60 1215,64 1240,72M1175,205 1210,205 1210,160 1240,122M1210,205 1240,240M1240,190 1222,195 1225,225 1216,238H1240" />
    </g>
    <path fill="none" stroke="#3b9dd2" strokeWidth="5" d="M2363,45H2380L2405,28 2427,12M2363,122 2402,170 2415,228 2520,275M2780,12 2390,410H2363" />
  </g>
);

const MapSvg = styled.svg`
  display: block;
`;

const MapDrawing = () => (
  <MapSvg width="1849" height="328" viewBox="0 0 1849 328">
    <West />
    <Middle />
    <South />
    <East />
    <Ethiopia />
    <path d="M0,101.700H813" stroke="#fff" strokeOpacity="0.500" />
    {TOWNS.map(([x, y]) => (
      <circle key={`${x}-${y}`} cx={x} cy={y} r="1.900" fill="#f7f5f1" stroke="#777" strokeWidth="0.900" />
    ))}
    <circle cx="526" cy="286" r="2.600" fill="#fff" stroke="#777" />
    {[[587, 136.500], [1213, 264]].map(([x, y]) => (
      <g key={x}><circle cx={x} cy={y} r="2.800" fill="#ddd" stroke="#555" /><circle cx={x} cy={y} r="1.100" fill="#444" /></g>
    ))}
    <g fontFamily='"Noto Sans", "DejaVu Sans", sans-serif' stroke="#fff" strokeOpacity="0.700" strokeWidth="2" paintOrder="stroke" strokeLinejoin="round">
      {LABELS.map(([text, x, y, kind, anchor], i) => (
        <text key={i} x={x} y={y + 3.700} textAnchor={anchor ?? "middle"} {...KIND[kind]}>{text}</text>
      ))}
    </g>
  </MapSvg>
);

const STATS = [
  ["Region", "East Shewa"], ["Woreda", "Oromia"], ["Startups", "0"], ["Mentors", "0"],
  ["Incubators", "0"], ["Doctors", "0"], ["Government", "0"],
];

const MENU = ["Startups", "Mentors", "Incubators", "Investors", "Gov't Bodies", "Disc. Forums"];

const INFO = [
  { icon: BsGeoAlt, label: "Location:", value: "Ethio China St, Addis Ababa, Ethiopia" },
  { icon: BsEnvelope, label: "Email:", value: "info@example.com" },
  { icon: BsPhone, label: "Call:", value: "+251 937 593529" },
];

export default function App() {
  return (
    <Window>
      <Global />
      <TabStrip>
        <PinnedTab><FirefoxLogo /></PinnedTab>
        <Tab>
          <Seal size={16} />
          <TabTitle>AII-StartUp</TabTitle>
          <IconSlot><Stroke size={10} box={10} w={1.100}><path d="M1.200 1.200l7.600 7.600M8.800 1.200L1.200 8.800" /></Stroke></IconSlot>
        </Tab>
        <IconSlot $left={14}><Stroke size={14} box={14} w={1.400}><path d="M7 1.200v11.600M1.200 7h11.600" /></Stroke></IconSlot>
        <WindowControls>
          <IconSlot><Stroke size={14} box={14} w={1.400}><path d="M1.500 4.200L7 9.800l5.500-5.600" /></Stroke></IconSlot>
          <IconSlot $left={44}><RoundButton><Stroke size={10} box={10} w={1.300}><path d="M1.500 7.500h7" /></Stroke></RoundButton></IconSlot>
          <RoundButton><Stroke size={10} box={10} w={1.200}><path d="M1.500 3.500h5v5h-5z" /><path d="M3.500 1.500h5v5" opacity="0.500" /></Stroke></RoundButton>
          <RoundButton><Stroke size={10} box={10} w={1.400}><path d="M1.700 1.700l6.600 6.600M8.300 1.700L1.700 8.300" /></Stroke></RoundButton>
        </WindowControls>
      </TabStrip>

      <Toolbar>
        <IconSlot><Stroke><path d="M14.500 8H1.800M7 2.800L1.800 8 7 13.200" /></Stroke></IconSlot>
        <IconSlot $left={20} $color="#b5b5b5"><Stroke><path d="M1.500 8h12.700M9 2.800L14.200 8 9 13.200" /></Stroke></IconSlot>
        <IconSlot $left={20}>
          <Stroke w={1.400}><path d="M13.300 4.600A6.300 6.300 0 1 0 14.300 8.600" /><path d="M14.300 1.800v4.400H9.900z" fill="currentColor" stroke="none" /></Stroke>
        </IconSlot>
        <UrlField>
          <IconSlot><Stroke size={17} box={17} w={1.400}><path d="M8.500 1C6.800 2.500 4.500 3.100 1.900 3.200c-.4 5.600 1.500 10.400 6.600 12.700 5.100-2.300 7-7.100 6.600-12.700C12.500 3.100 10.200 2.500 8.500 1z" /></Stroke></IconSlot>
          <IconSlot $left={11}>
            <Stroke w={1.500}><path d="M3.700 1.500h5.100l4.200 4.200v7.300a1.400 1.400 0 0 1-1.400 1.400H3.700A1.400 1.400 0 0 1 2.300 13V2.900a1.400 1.400 0 0 1 1.400-1.400z" /><path d="M8.500 1.500V6h4.500z" fill="currentColor" /></Stroke>
          </IconSlot>
          <UrlText><b>localhost</b>:8000/#about</UrlText>
          <IconSlot><Stroke size={17} box={17} w={1.400}><path d="M8.500 1.300l2.100 4.500 4.900.6-3.600 3.400.9 4.900-4.300-2.400-4.300 2.400.9-4.900L1.500 6.400l4.900-.6z" /></Stroke></IconSlot>
        </UrlField>
        <IconSlot $left={127}><Stroke w={1.400}><path d="M3 2.200h10a1.300 1.300 0 0 1 1.300 1.300v4.200a6.300 6.300 0 0 1-12.600 0V3.500A1.300 1.300 0 0 1 3 2.200z" /><path d="M5 6.500l3 2.900 3-2.900" /></Stroke></IconSlot>
        <IconSlot $left={20}><Stroke w={1.400}><path d="M2.200 14.700V11.900h1.200a1.500 1.500 0 1 0 0-3.400H2.200V5.300h4V3.100a1.700 1.700 0 0 1 3.500 0v2.200h4.100v9.400z" /></Stroke></IconSlot>
        <IconSlot $left={20}><Stroke w={1.300}><path d="M2 3.500h12M2 8h12M2 12.500h12" /></Stroke></IconSlot>
      </Toolbar>

      <SiteHeader>
        <HeaderGrid>
          <Brand><Seal size={40} /><BrandName>AII-Startup</BrandName></Brand>
          <Nav>
            <NavItem>Home</NavItem>
            <NavItem>About</NavItem>
            <NavItem $active>
              Network
              <Stroke size={11} box={11} w={0.900}><path d="M1 3.300l4.500 4.500L10 3.300" /></Stroke>
              <Dropdown>{MENU.map((m) => <DropdownItem key={m}>{m}</DropdownItem>)}</Dropdown>
            </NavItem>
            <NavItem>Contact</NavItem>
          </Nav>
          <Pill>Login</Pill>
          <Pill>Signup</Pill>
        </HeaderGrid>
      </SiteHeader>

      <MapSection>
        <MapDrawing />
        <Popup>
          <StatList>
            {STATS.map(([k, v]) => <StatRow key={k}>{k}<b>{v}</b></StatRow>)}
          </StatList>
        </Popup>
        <Attribution>
          <svg width="14" height="14" viewBox="0 0 14 14">
            <path d="M0 8.500L7 5l7 3.500L7 13z" fill="#41636f" />
            <path d="M0 6L5 1.500Q7 .2 9 1.500L14 6v1.500L7 12 0 7.500z" fill="#4fc3d0" />
          </svg>
          <span>© <a>OpenStreetMap</a> contributors.</span>
        </Attribution>
      </MapSection>

      <Contact>
        <ContactTitle>Contact Us</ContactTitle>
        <Columns>
          <InfoCard>
            <InfoTitle>Get in touch</InfoTitle>
            {INFO.map(({ icon: Icon, label, value }) => (
              <InfoItem key={label}>
                <Icon size={24} />
                <InfoText>
                  <InfoLabel>{label}</InfoLabel>
                  <InfoValue>{value}</InfoValue>
                </InfoText>
              </InfoItem>
            ))}
          </InfoCard>
          <Form>
            <Field placeholder="Your Name" />
            <Field defaultValue="test@test.test" />
            <Field $wide $focus placeholder="Subject" />
            <Message defaultValue="test message" />
          </Form>
        </Columns>
      </Contact>

      <StatusBubble>localhost:8000/#</StatusBubble>
    </Window>
  );
}
